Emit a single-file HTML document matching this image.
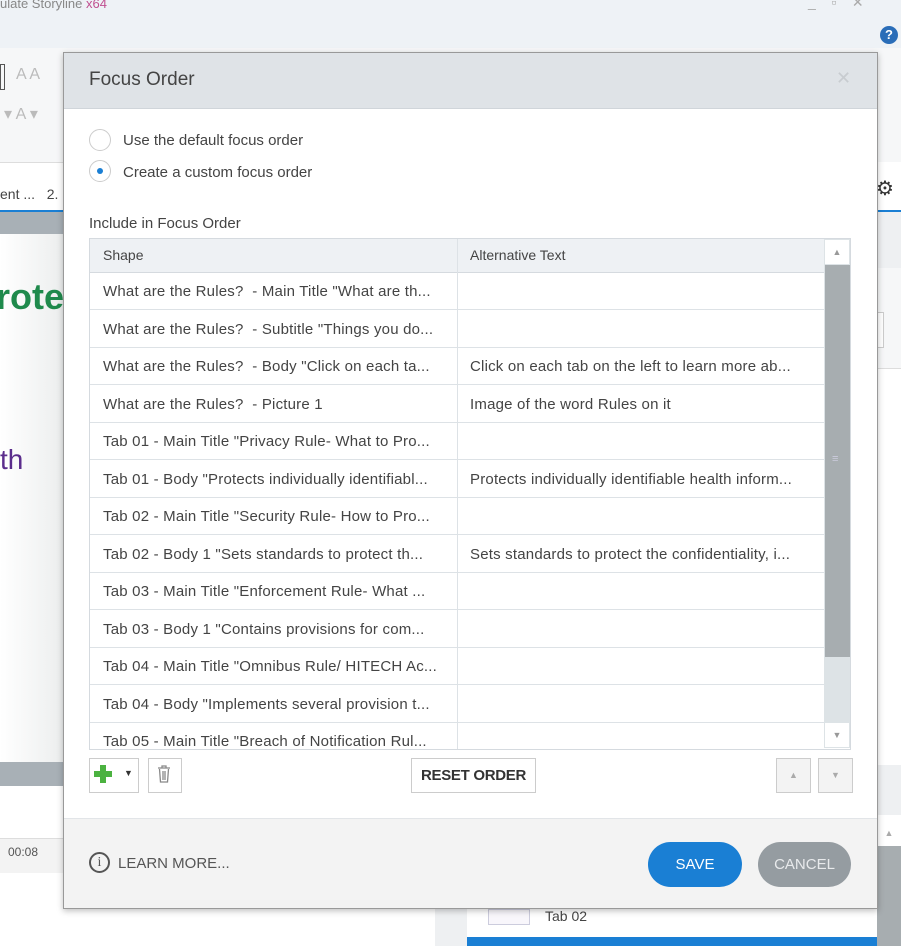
<!DOCTYPE html>
<html><head><style>
body{margin:0;width:901px;height:946px;position:relative;overflow:hidden;background:#fff;font-family:"Liberation Sans",sans-serif;}
.a{position:absolute}
.t{font-size:15px;color:#444;}
.row{position:absolute;left:90px;width:734px;height:37px;border-bottom:1px solid #dde2e6;font-size:15px;color:#444;}
.row span{position:absolute;top:11px;white-space:nowrap;letter-spacing:0.2px}
</style></head><body>
<!-- background app -->
<div class="a" style="left:0;top:0;width:901px;height:48px;background:#eef2f6"></div>
<div class="a" style="left:0;top:-4px;font-size:13px;color:#888">ulate Storyline <span style="color:#c05090">x64</span></div>
<div class="a" style="left:808px;top:-6px;font-size:14px;color:#aaa">_&nbsp;&nbsp;&nbsp;&nbsp;▫&nbsp;&nbsp;&nbsp;&nbsp;✕</div>
<div class="a" style="left:880px;top:26px;width:18px;height:18px;border-radius:50%;background:#2a6db8;color:#fff;font-size:13px;font-weight:bold;text-align:center;line-height:18px">?</div>
<div class="a" style="left:0;top:48px;width:901px;height:114px;background:#f6f7f8;border-bottom:1px solid #ddd"></div>
<div class="a" style="left:0;top:64px;width:3px;height:24px;border:1px solid #555"></div>
<div class="a" style="left:16px;top:66px;font-size:16px;color:#bbb">A A</div>
<div class="a" style="left:4px;top:104px;font-size:16px;color:#bbb">▾ A ▾</div>
<div class="a" style="left:0;top:186px;font-size:14px;color:#444">ent ...&nbsp;&nbsp; 2.</div>
<div class="a" style="left:0;top:210px;width:901px;height:2px;background:#1a7fd4"></div>
<div class="a" style="left:0;top:212px;width:63px;height:22px;background:#a8b0b6"></div>
<div class="a" style="left:0;top:234px;width:63px;height:528px;background:linear-gradient(90deg,#fff,#eceeee)"></div>
<div class="a" style="left:-4px;top:276px;font-size:36px;font-weight:bold;color:#1f8a4c">rote</div>
<div class="a" style="left:0;top:444px;font-size:28px;color:#5b2d8c">th</div>
<div class="a" style="left:0;top:762px;width:63px;height:24px;background:#a8b0b6"></div>
<div class="a" style="left:0;top:838px;width:63px;height:34px;background:#f3f3f3;border-top:1px solid #ddd"></div>
<div class="a" style="left:8px;top:845px;font-size:12px;color:#555">00:08</div>
<div class="a" style="left:877px;top:162px;width:24px;height:48px;background:#fff"></div>
<div class="a" style="left:876px;top:176px;font-size:20px;color:#333">⚙</div>
<div class="a" style="left:877px;top:212px;width:24px;height:56px;background:#eef0f2"></div>
<div class="a" style="left:877px;top:268px;width:24px;height:100px;background:#f6f7f8;border-bottom:1px solid #ddd"></div>
<div class="a" style="left:877px;top:312px;width:6px;height:34px;border:1px solid #ccc;border-left:none;background:#fff"></div>
<div class="a" style="left:877px;top:765px;width:24px;height:50px;background:#eef0f2"></div>
<div class="a" style="left:877px;top:820px;width:24px;height:26px;background:#fff;font-size:9px;color:#aaa;text-align:center;line-height:26px">▲</div>
<div class="a" style="left:877px;top:846px;width:24px;height:100px;background:#a7adb0"></div>
<div class="a" style="left:435px;top:908px;width:32px;height:38px;background:#eef0f2"></div>
<div class="a" style="left:467px;top:908px;width:410px;height:38px;background:#fff"></div>
<div class="a" style="left:488px;top:909px;width:40px;height:14px;border:1px solid #ccd;background:#f8f6fb"></div>
<div class="a" style="left:545px;top:908px;font-size:14px;color:#444">Tab 02</div>
<div class="a" style="left:467px;top:937px;width:410px;height:9px;background:#1a7fd4"></div>

<!-- dialog -->
<div class="a" style="left:63px;top:52px;width:813px;height:855px;background:#fff;border:1px solid #999;box-shadow:0 2px 6px rgba(0,0,0,.25)"></div>
<div class="a" style="left:64px;top:53px;width:813px;height:55px;background:#dfe3e7;border-bottom:1px solid #d0d5da"></div>
<div class="a" style="left:89px;top:69px;font-size:19px;color:#444">Focus Order</div>
<div class="a" style="left:836px;top:68px;font-size:18px;color:#c8ccd0">✕</div>
<div class="a" style="left:89px;top:129px;width:20px;height:20px;border:1px solid #ccc;border-radius:50%;background:#fff"></div>
<div class="a t" style="left:123px;top:132px">Use the default focus order</div>
<div class="a" style="left:89px;top:160px;width:20px;height:20px;border:1px solid #ccc;border-radius:50%;background:#fff"></div>
<div class="a" style="left:97px;top:168px;width:6px;height:6px;border-radius:50%;background:#1a7fd4"></div>
<div class="a t" style="left:123px;top:164px">Create a custom focus order</div>
<div class="a t" style="left:89px;top:215px">Include in Focus Order</div>
<div class="a" style="left:89px;top:238px;width:760px;height:510px;border:1px solid #d5dadf;background:#fff;overflow:hidden">
 <div class="a" style="left:0;top:0;width:735px;height:33px;background:#eef1f4;border-bottom:1px solid #d5dadf"></div>
 <div class="a" style="left:13px;top:8px;font-size:14px;color:#444">Shape</div>
 <div class="a" style="left:380px;top:8px;font-size:14px;color:#444">Alternative Text</div>
 <div class="a" style="left:367px;top:0;width:1px;height:510px;background:#dde2e6"></div>
</div>
<div class="row" style="top:272px"><span style="left:13px">What are the Rules?&nbsp; - Main Title "What are th...</span></div>
<div class="row" style="top:310px"><span style="left:13px">What are the Rules?&nbsp; - Subtitle "Things you do...</span></div>
<div class="row" style="top:347px"><span style="left:13px">What are the Rules?&nbsp; - Body "Click on each ta...</span><span style="left:380px">Click on each tab on the left to learn more ab...</span></div>
<div class="row" style="top:385px"><span style="left:13px">What are the Rules?&nbsp; - Picture 1</span><span style="left:380px">Image of the word Rules on it</span></div>
<div class="row" style="top:422px"><span style="left:13px">Tab 01 - Main Title "Privacy Rule- What to Pro...</span></div>
<div class="row" style="top:460px"><span style="left:13px">Tab 01 - Body "Protects individually identifiabl...</span><span style="left:380px">Protects individually identifiable health inform...</span></div>
<div class="row" style="top:497px"><span style="left:13px">Tab 02 - Main Title "Security Rule- How to Pro...</span></div>
<div class="row" style="top:535px"><span style="left:13px">Tab 02 - Body 1 "Sets standards to protect th...</span><span style="left:380px">Sets standards to protect the confidentiality, i...</span></div>
<div class="row" style="top:572px"><span style="left:13px">Tab 03 - Main Title "Enforcement Rule- What ...</span></div>
<div class="row" style="top:610px"><span style="left:13px">Tab 03 - Body 1 "Contains provisions for com...</span></div>
<div class="row" style="top:647px"><span style="left:13px">Tab 04 - Main Title "Omnibus Rule/ HITECH Ac...</span></div>
<div class="row" style="top:685px"><span style="left:13px">Tab 04 - Body "Implements several provision t...</span></div>
<div class="row" style="top:722px;border:none"><span style="left:13px">Tab 05 - Main Title "Breach of Notification Rul...</span></div>
<div class="a" style="left:457px;top:272px;width:1px;height:476px;background:#dde2e6"></div>
<!-- scrollbar -->
<div class="a" style="left:824px;top:239px;width:26px;height:509px;background:#dde3e6"></div>
<div class="a" style="left:825px;top:240px;width:24px;height:24px;background:#fff;font-size:9px;color:#999;text-align:center;line-height:24px">▲</div>
<div class="a" style="left:825px;top:265px;width:25px;height:392px;background:#a7adb0"></div>
<div class="a" style="left:832px;top:455px;font-size:11px;color:#ccd;line-height:8px">≡</div>
<div class="a" style="left:825px;top:723px;width:24px;height:24px;background:#fff;font-size:9px;color:#999;text-align:center;line-height:24px">▼</div>
<!-- toolbar -->
<div class="a" style="left:89px;top:758px;width:48px;height:33px;border:1px solid #ccc;background:#fff"></div>
<svg class="a" style="left:93px;top:764px" width="20" height="20"><path d="M7 1h6v6h6v6h-6v6H7v-6H1V7h6z" fill="#4bb240"/></svg>
<div class="a" style="left:124px;top:768px;font-size:9px;color:#333">▼</div>
<div class="a" style="left:148px;top:758px;width:32px;height:33px;border:1px solid #ccc;background:#fff"></div>
<svg class="a" style="left:155px;top:764px" width="18" height="20"><path d="M3 4h12M7 4V2h4v2M4.5 5l1 13h7l1-13M8 7v9M10 7v9" stroke="#888" fill="none" stroke-width="1.3"/></svg>
<div class="a" style="left:411px;top:758px;width:123px;height:33px;border:1px solid #ccc;background:#fff;font-size:15px;color:#333;text-align:center;line-height:33px;font-weight:bold;letter-spacing:-0.3px">RESET ORDER</div>
<div class="a" style="left:776px;top:758px;width:33px;height:33px;border:1px solid #ccc;background:#f3f3f3;font-size:9px;color:#aaa;text-align:center;line-height:33px">▲</div>
<div class="a" style="left:818px;top:758px;width:33px;height:33px;border:1px solid #ccc;background:#f3f3f3;font-size:9px;color:#aaa;text-align:center;line-height:33px">▼</div>
<!-- footer -->
<div class="a" style="left:64px;top:818px;width:813px;height:89px;background:#f3f3f3;border-top:1px solid #e2e5e8"></div>
<div class="a" style="left:89px;top:852px;width:21px;height:21px;border:2px solid #555;border-radius:50%;box-sizing:border-box;text-align:center;font-size:14px;font-family:'Liberation Serif',serif;color:#555;line-height:18px">i</div>
<div class="a" style="left:118px;top:855px;font-size:15px;color:#555">LEARN MORE...</div>
<div class="a" style="left:648px;top:842px;width:94px;height:45px;border-radius:23px;background:#1a7fd4;color:#fff;font-size:15px;text-align:center;line-height:45px">SAVE</div>
<div class="a" style="left:758px;top:842px;width:93px;height:45px;border-radius:23px;background:#959ca1;color:#e8eaec;font-size:15px;text-align:center;line-height:45px">CANCEL</div>
</body></html>
